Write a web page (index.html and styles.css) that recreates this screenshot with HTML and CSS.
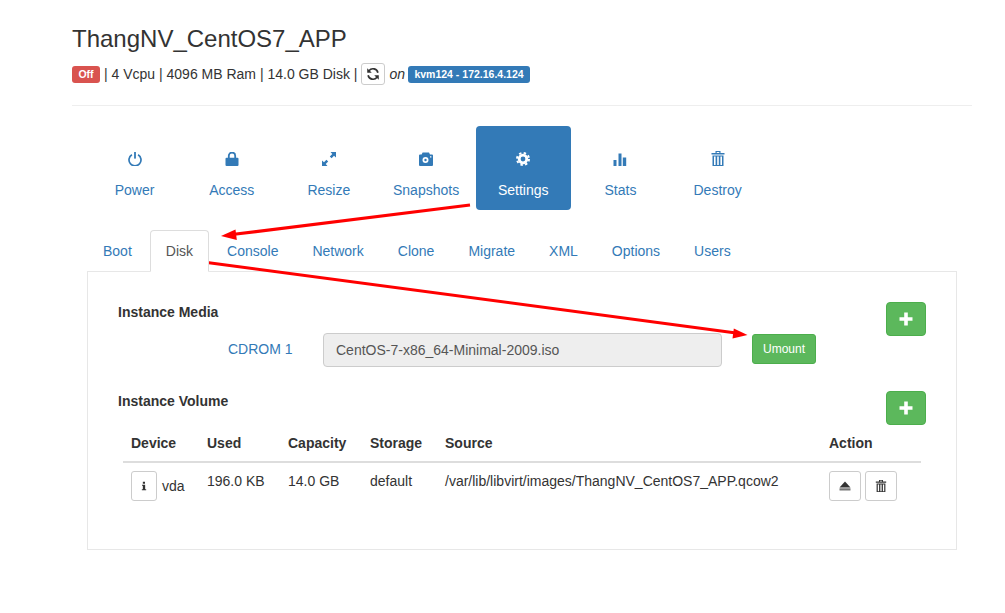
FILE: index.html
```html
<!DOCTYPE html>
<html>

<head>
    <meta charset="UTF-8">
    <title>ThangNV_CentOS7_APP</title>
    <link rel="stylesheet" href="styles.css">
</head>

<body>
    <div class="page">
        <h1 class="title">ThangNV_CentOS7_APP</h1>
        <div class="meta">
            <span class="label label-off">Off</span>
            <span>| 4 Vcpu | 4096 MB Ram | 14.0 GB Disk |</span>
            <button class="btn-refresh">
                <svg class="icon" viewBox="0 0 16 16">
                    <path d="M13.6 6.6A5.8 5.8 0 0 0 3.4 4.2M2.4 9.4a5.8 5.8 0 0 0 10.2 2.4" fill="none" stroke="#333" stroke-width="1.9"/>
                    <path d="M1.4 1.4v5.2h5.2zM14.6 14.6V9.4H9.4z" fill="#333"/>
                </svg>
            </button>
            <em>on</em>
            <span class="label label-host">kvm124 - 172.16.4.124</span>
        </div>
        <hr class="divider">

        <ul class="pills">
            <li>
                <svg class="icon" viewBox="0 0 14 14">
                    <path d="M3.9 2.7a6 6 0 1 0 6.2 0" fill="none" stroke="currentColor" stroke-width="1.7"/>
                    <rect x="6.1" y="0" width="1.8" height="6.6" fill="currentColor"/>
                </svg>
                <span>Power</span>
            </li>
            <li>
                <svg class="icon" viewBox="0 0 14 14">
                    <path d="M3.8 6.5V3.8a3.2 3.2 0 0 1 6.4 0v2.7" fill="none" stroke="currentColor" stroke-width="1.8"/>
                    <rect x="0.5" y="5.8" width="13" height="8.2" rx="1" fill="currentColor"/>
                </svg>
                <span>Access</span>
            </li>
            <li>
                <svg class="icon" viewBox="0 0 14 14">
                    <path d="M14 0v5.5L12 3.7 9.6 6.2 7.8 4.4 10.3 2 8.5 0zM0 14V8.5l2 1.8 2.4-2.5 1.8 1.8L3.7 12l1.8 2z" fill="currentColor"/>
                </svg>
                <span>Resize</span>
            </li>
            <li>
                <svg class="icon" viewBox="0 0 14 14">
                    <path fill-rule="evenodd" d="M1 2.6h1.6L3.6 0.6h6.4L11 2.6H13a1 1 0 0 1 1 1V13a1 1 0 0 1-1 1H1a1 1 0 0 1-1-1V3.600a1 1 0 0 1 1-1zM6.500 5a3 3 0 1 0 0 6 3 3 0 0 0 0-6zM6.500 6.800a1.200 1.200 0 1 1 0 2.400 1.200 1.200 0 0 1 0-2.400zM11 4.200h1.400v1.200H11z" fill="currentColor"/>
                </svg>
                <span>Snapshots</span>
            </li>
            <li class="active">
                <svg class="icon" viewBox="0 0 14 14">
                    <circle cx="7" cy="7" r="3.8" fill="none" stroke="currentColor" stroke-width="2.8"/>
                    <circle cx="7" cy="7" r="6" fill="none" stroke="currentColor" stroke-width="2" stroke-dasharray="2.4 2.31"/>
                </svg>
                <span>Settings</span>
            </li>
            <li>
                <svg class="icon" viewBox="0 0 14 14">
                    <path d="M0.500 8h3v6h-3zM5.500 1.500h3V14h-3zM9.800 5.500h3.400V14H9.800z" fill="currentColor"/>
                </svg>
                <span>Stats</span>
            </li>
            <li>
                <svg class="icon icon-trash" viewBox="0 0 14 15">
                    <use href="#trash"/>
                </svg>
                <span>Destroy</span>
            </li>
        </ul>

        <ul class="tabs">
            <li>Boot</li>
            <li class="active">Disk</li>
            <li>Console</li>
            <li>Network</li>
            <li>Clone</li>
            <li>Migrate</li>
            <li>XML</li>
            <li>Options</li>
            <li>Users</li>
        </ul>

        <div class="panel">
            <div class="section-head">
                <h3>Instance Media</h3>
                <button class="btn-add">
                    <svg class="icon-plus" viewBox="0 0 14 14"><use href="#plus"/></svg>
                </button>
            </div>
            <div class="media-row">
                <label>CDROM 1</label>
                <input class="media-input" type="text" value="CentOS-7-x86_64-Minimal-2009.iso" disabled>
                <button class="btn-umount">Umount</button>
            </div>

            <div class="section-head volume-head">
                <h3>Instance Volume</h3>
                <button class="btn-add">
                    <svg class="icon-plus" viewBox="0 0 14 14"><use href="#plus"/></svg>
                </button>
            </div>
            <table class="volumes">
                <colgroup>
                    <col class="col-device">
                    <col class="col-used">
                    <col class="col-capacity">
                    <col class="col-storage">
                    <col class="col-source">
                    <col class="col-action">
                </colgroup>
                <tr>
                    <th>Device</th>
                    <th>Used</th>
                    <th>Capacity</th>
                    <th>Storage</th>
                    <th>Source</th>
                    <th>Action</th>
                </tr>
                <tr>
                    <td>
                        <div class="device">
                            <button class="btn-small btn-info">
                                <svg class="icon-info" viewBox="0 0 12 12">
                                    <path d="M4.600 0.800h2.600v2.400H4.600zM3.600 4.400h3.800v5.400h1.200v1.400H3.400V9.800h1.200V5.800h-1z" fill="#333"/>
                                </svg>
                            </button>
                            <span>vda</span>
                        </div>
                    </td>
                    <td>196.0 KB</td>
                    <td>14.0 GB</td>
                    <td>default</td>
                    <td>/var/lib/libvirt/images/ThangNV_CentOS7_APP.qcow2</td>
                    <td>
                        <div class="actions">
                            <button class="btn-small btn-action">
                                <svg class="icon-small" viewBox="0 0 12 12">
                                    <path d="M6 1.500l5.500 6H0.500z" fill="#333"/>
                                    <rect x="0.500" y="8.300" width="11" height="2.200" fill="#777"/>
                                </svg>
                            </button>
                            <button class="btn-small btn-action">
                                <svg class="icon-small" viewBox="0 0 14 15"><use href="#trash"/></svg>
                            </button>
                        </div>
                    </td>
                </tr>
            </table>
        </div>
    </div>

    <!-- shared icons -->
    <svg class="defs" width="0" height="0">
        <defs>
            <g id="trash">
                <path fill="currentColor" fill-rule="evenodd" d="M4.500 0h5v2h4v1.500H0.500V2h4zM5.700 1v1h2.600V1z"/>
                <path fill="currentColor" fill-rule="evenodd" d="M1.500 4.500h11V15h-11zM3 5.500v8.500h1.600V5.500zM6.200 5.500v8.500h1.600V5.500zM9.400 5.500v8.500h1.600V5.500z"/>
            </g>
            <path id="plus" fill="currentColor" d="M5.200 0.500h3.600v4.700h4.700v3.600H8.800v4.700H5.200V8.800H0.500V5.200h4.700z"/>
        </defs>
    </svg>

    <!-- red arrows drawn over the screenshot -->
    <svg class="arrows" viewBox="0 0 1005 613">
        <line x1="470" y1="205" x2="232" y2="234.600" stroke="#f00" stroke-width="3"/>
        <path d="M221 236L235.500 229.500 236.800 240z" fill="#f00"/>
        <line x1="207" y1="262.500" x2="736" y2="332.900" stroke="#f00" stroke-width="3"/>
        <path d="M747.500 335L732.500 338.500 733.800 328.500z" fill="#f00"/>
    </svg>
</body>

</html>
```

FILE: styles.css
```css
body {
    position: relative;
    margin: 0;
    background-color: #fff;
    color: #333;
    font-family: "Liberation Sans", Arial, sans-serif;
    font-size: 14px;
    line-height: 20px;
}

button {
    padding: 0;
    font-family: inherit;
    cursor: pointer;
}

ul {
    margin: 0;
    padding: 0;
    list-style: none;
}

.page {
    width: 900px;
    margin-left: 72px;
    padding-top: 26px;
}

.title {
    margin: 0;
    font-size: 24px;
    font-weight: 400;
    line-height: 26px;
}

.meta {
    display: flex;
    align-items: center;
    height: 22px;
    margin-top: 11px;
}

.label {
    height: 17px;
    border-radius: 3px;
    color: #fff;
    font-size: 10.5px;
    font-weight: 700;
    line-height: 17px;
    text-align: center;
}

.label-off {
    width: 28px;
    margin-right: 4px;
    background-color: #d9534f;
}

.label-host {
    width: 122px;
    background-color: #337ab7;
}

.btn-refresh {
    display: flex;
    align-items: center;
    justify-content: center;
    width: 24px;
    height: 22px;
    margin: 0 4px;
    background-color: #fff;
    border: 1px solid #ccc;
    border-radius: 3px;
}

.btn-refresh .icon {
    width: 14px;
    height: 14px;
}

.meta em {
    margin-right: 3px;
}

.divider {
    height: 1px;
    margin: 20px 0 20px;
    border: 0;
    background-color: #eee;
}

.icon {
    display: block;
    width: 14px;
    height: 14px;
}

.icon-trash {
    height: 15px;
    margin: -1px 0 0;
}

.pills {
    display: flex;
    gap: 2.2px;
    margin-left: 15px;
}

.pills li {
    display: flex;
    flex-direction: column;
    align-items: center;
    gap: 14px;
    box-sizing: border-box;
    width: 95px;
    height: 84px;
    padding-top: 26px;
    border-radius: 4px;
    color: #337ab7;
}

.pills li.active {
    background-color: #337ab7;
    color: #fff;
}

.tabs {
    display: flex;
    gap: 2px;
    margin: 20px 0 -1px 15px;
}

.tabs li {
    position: relative;
    padding: 10px 15px;
    border: 1px solid transparent;
    border-radius: 4px 4px 0 0;
    color: #337ab7;
}

.tabs li.active {
    z-index: 1;
    background-color: #fff;
    border-color: #ddd #ddd #fff;
    color: #555;
}

.panel {
    box-sizing: border-box;
    width: 870px;
    height: 279px;
    margin-left: 15px;
    padding: 30px 30px 0;
    border: 1px solid #e7e7e7;
}

.section-head {
    display: flex;
    justify-content: space-between;
    align-items: flex-start;
}

.section-head h3 {
    margin: 0;
    font-size: 14px;
    font-weight: 700;
    line-height: 20px;
}

.volume-head {
    margin-top: 24px;
}

.btn-add {
    display: flex;
    align-items: center;
    justify-content: center;
    width: 40px;
    height: 34px;
    background-color: #5cb85c;
    border: 1px solid #4cae4c;
    border-radius: 4px;
    color: #fff;
}

.icon-plus {
    display: block;
    width: 14px;
    height: 14px;
}

.media-row {
    display: flex;
    align-items: flex-start;
    margin: -3px 0 0 110px;
}

.media-row label {
    width: 95px;
    padding-top: 6px;
    color: #337ab7;
}

.media-input {
    box-sizing: border-box;
    width: 399px;
    height: 34px;
    padding: 6px 12px;
    background-color: #eee;
    border: 1px solid #ccc;
    border-radius: 4px;
    color: #555;
    font-family: inherit;
    font-size: 14px;
}

.btn-umount {
    box-sizing: border-box;
    width: 64px;
    height: 30px;
    margin: 1px 0 0 30px;
    background-color: #5cb85c;
    border: 1px solid #4cae4c;
    border-radius: 3px;
    color: #fff;
    font-size: 12px;
}

.volumes {
    width: 798px;
    margin-left: 5px;
    border-collapse: collapse;
    table-layout: fixed;
}

.col-device { width: 76px; }
.col-used { width: 81px; }
.col-capacity { width: 82px; }
.col-storage { width: 75px; }
.col-source { width: 384px; }
.col-action { width: 100px; }

.volumes th {
    padding: 8px;
    border-bottom: 2px solid #ddd;
    font-weight: 700;
    text-align: left;
}

.volumes td {
    padding: 8px;
    vertical-align: top;
}

.device {
    display: flex;
    align-items: center;
    gap: 5px;
}

.actions {
    display: flex;
    gap: 4px;
}

.btn-small {
    display: flex;
    align-items: center;
    justify-content: center;
    height: 30px;
    background-color: #fff;
    border: 1px solid #ccc;
    border-radius: 3px;
    color: #333;
}

.btn-info {
    width: 26px;
}

.btn-action {
    width: 32px;
}

.icon-small {
    display: block;
    width: 12px;
    height: 12px;
}

.icon-info {
    display: block;
    width: 10px;
    height: 10px;
}

.defs {
    position: absolute;
}

.arrows {
    position: absolute;
    top: 0;
    left: 0;
    width: 1005px;
    height: 613px;
    pointer-events: none;
}
```
